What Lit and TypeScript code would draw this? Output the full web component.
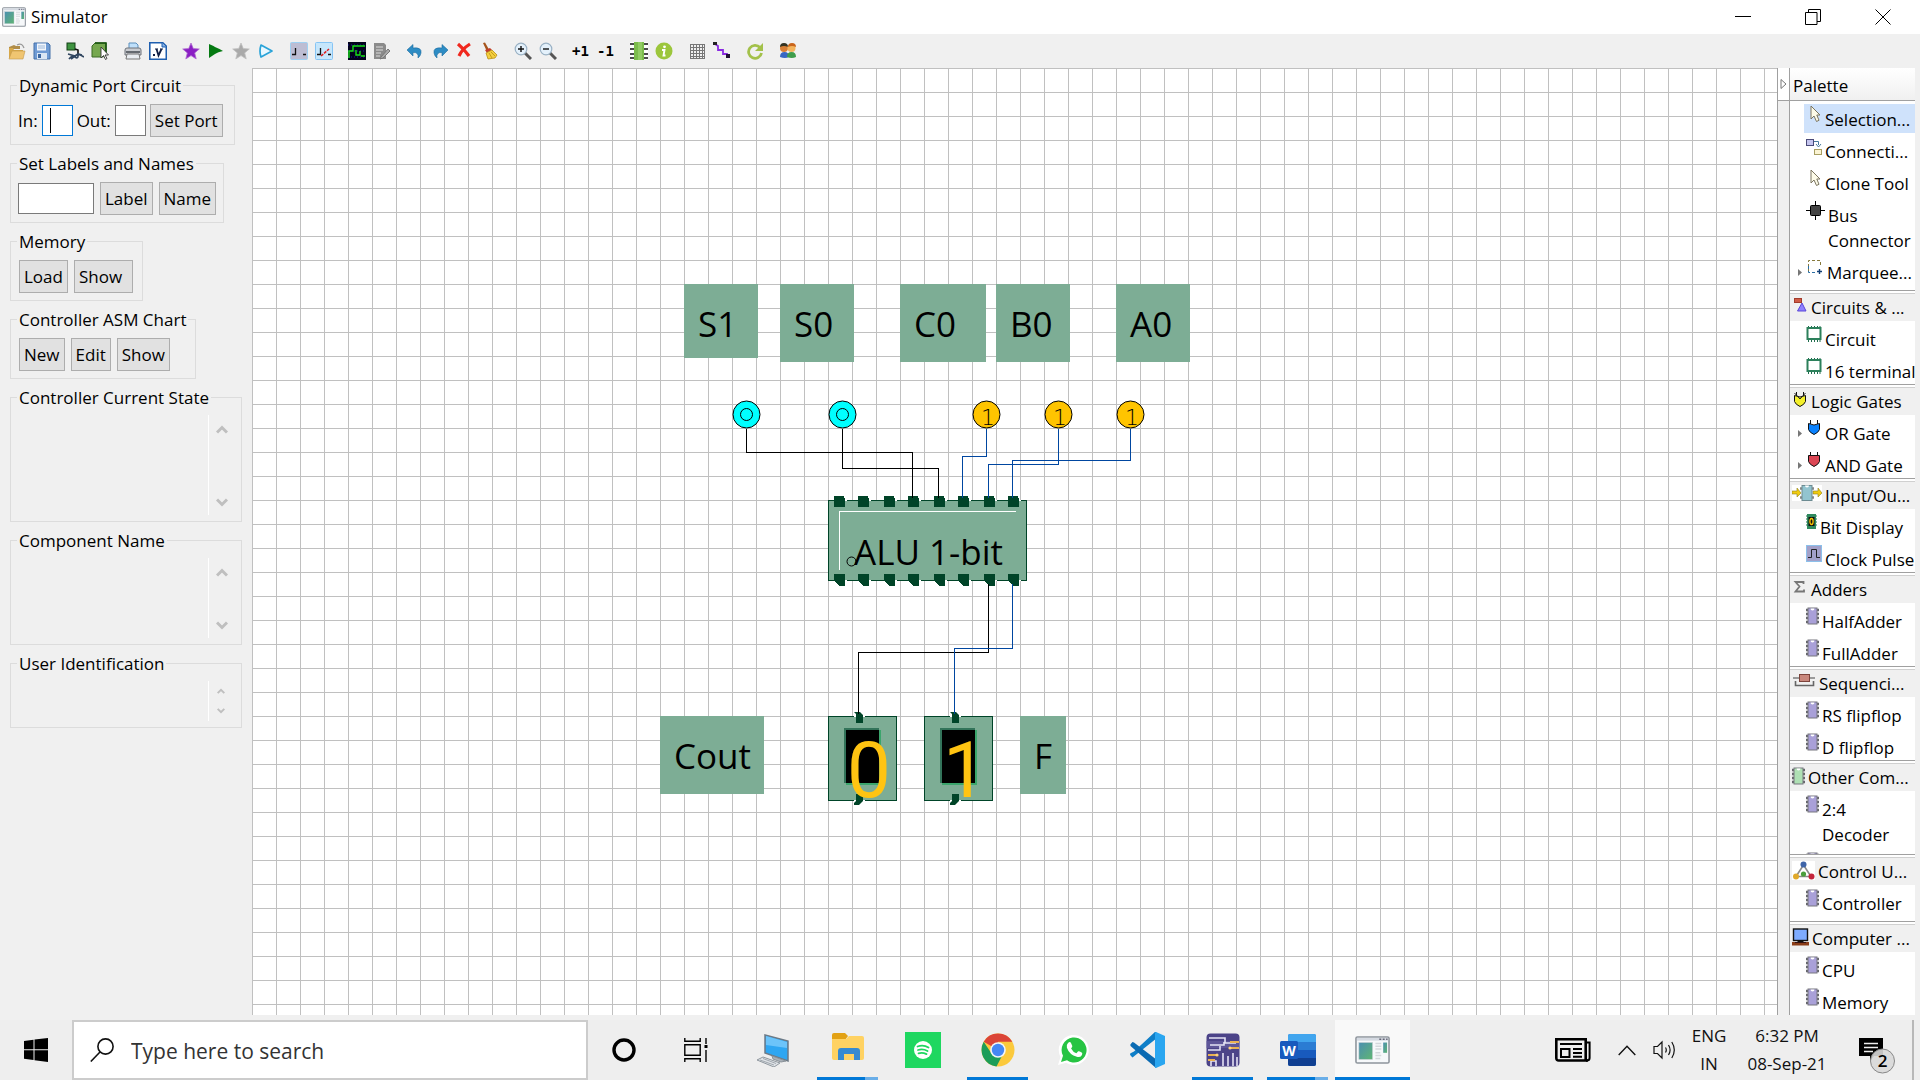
import { LitElement, html, svg, css, nothing, TemplateResult } from "lit";
import { customElement, property } from "lit/decorators.js";
import { classMap } from "lit/directives/class-map.js";

const FONT = css`"Open Sans", "Noto Sans", sans-serif`;

/* ---------- shared icon artwork ---------- */

const icon = (w: number, h: number, body: unknown) =>
  html`<svg width=${w} height=${h} viewBox="0 0 ${w} ${h}" aria-hidden="true">${body}</svg>`;

const appIcon = (w: number, h: number) => html`<svg width=${w} height=${h} viewBox="0 0 36 30" preserveAspectRatio="none" aria-hidden="true">
  <defs><linearGradient id="ag" x1="0" y1="0" x2="1" y2="1"><stop offset="0" stop-color="#4b8fb0"/><stop offset="1" stop-color="#5fb573"/></linearGradient></defs>
  <rect x="1" y="1" width="34" height="28" rx="1.5" fill="#f6f8fa" stroke="#8d949c" stroke-width="1.6"/>
  <rect x="2" y="2" width="32" height="3" fill="#d5dae2"/>
  <path d="M25 3.5h2M28.500 3.500h2M32 3.500h1.500" stroke="#667" stroke-width="1.400"/>
  <rect x="4" y="7" width="14" height="18" fill="url(#ag)" stroke="#c2cbd0" stroke-width=".6"/>
  <path d="M21 8h6M21 11h6M21 14h6M21 18h5M21 21h6M21 24h5" stroke="#d3d7db" stroke-width="1.600"/>
  <rect x="29" y="7" width="4" height="11" fill="url(#ag)"/>
</svg>`;

const starPath = "M9 1l2.300 5.600 6 .4-4.600 3.900 1.500 6L9 13.600 3.800 16.900l1.500-6L.7 7l6-.4z";

const chip = (fill: string) => icon(13, 18, svg`
  <path d="M0 3h3M0 7h3M0 11h3M0 15h3M10 3h3M10 7h3M10 11h3M10 15h3" stroke="#66666c" stroke-width="2.600"/>
  <rect x="2" y="1" width="9" height="16" fill=${fill} stroke="#77777f"/>
  <path d="M4.500 1.500a2 2 0 0 0 4 0z" fill="#fff"/>`);

const cursorIcon = icon(16, 18, svg`<path d="M5 1v13l3-3 2.500 5.500 2.500-1.200L10.800 10H14z" fill="#fdfbe8" stroke="#7b7560"/>`);

const circuitIcon = icon(16, 18, svg`
  <path d="M2.500 1v16M5.500 1v16M8.500 1v16M11.500 1v16M14 1v16" stroke="#1e6c4c"/>
  <rect x="1.500" y="3" width="13" height="11" fill="#fff" stroke="#2c805b" stroke-width="2"/>`);

const gate = (fill: string, inner: unknown = nothing) => icon(16, 18, svg`
  <path d="M4.500 1v4M11.500 1v4" stroke="#111"/>
  <path d="M2.500 4.500q5.500 3 11 0v6q-1 3-5.500 5q-4.500-2-5.500-5z" fill=${fill} stroke="#111"/>${inner}`);

/* ---------- toolbar ---------- */

const toolIcons: Record<string, unknown> = {
  open: svg`<path d="M1 5l5-2 2 1h4v3H1z" fill="#b08d4a"/><path d="M9 3q4-2 6 1l1 2" fill="none" stroke="#999" stroke-width="1.300"/><path d="M1 16V6h4l1 2h9v8z" fill="#d8a848"/><path d="M1 17l3-8h13l-2 8z" fill="#f0c571" stroke="#c2974a" stroke-width=".6"/>`,
  save: svg`<path d="M1 1h14l2 2v14H1z" fill="#6f9bd4" stroke="#4470a8"/><rect x="4" y="1.500" width="9" height="7" fill="#f2f6fb"/><path d="M5 4h7M5 6h7" stroke="#9db8da"/><rect x="4" y="11" width="10" height="6" fill="#dbe7f4"/><rect x="5" y="12" width="3" height="4" fill="#3b66a0"/>`,
  connect: svg`<rect x="1" y="1" width="8" height="7" fill="#3f9440" stroke="#123f14"/><path d="M9 7l3 1v4" fill="none" stroke="#111" stroke-width="1.600"/><path d="M2 12l7 2 3-2 4 1M3 17q3-4 6-2t3-1 6 1M5 17l4-3" fill="none" stroke="#30455f" stroke-width="1.700"/>`,
  select: svg`<path d="M1 4l3-3h11v12l-3 2H1z" fill="#76a84f" stroke="#3a6b24"/><path d="M4 1h11v12" fill="none" stroke="#14520d" stroke-width="1.600"/><path d="M10 5v11l2.500-2.500 2 4 1.500-1-2-3.500h3.500z" fill="#fff" stroke="#333" stroke-width=".9"/>`,
  print: svg`<path d="M5 7V1h7l2 2v4z" fill="#bfe0fb" stroke="#5c8fbd"/><path d="M1 8q0-2 2-2h12q2 0 2 2v5H1z" fill="#c9ccd1" stroke="#6e737a"/><path d="M2 10h14" stroke="#4b5057" stroke-width="1.600"/><path d="M3 12h12l1 5H2z" fill="#e9edf2" stroke="#777"/>`,
  verilog: svg`<path d="M.8.8h13l3.500 3.500v13H.8z" fill="#fff" stroke="#1f5fb0" stroke-width="1.600"/><path d="M13 1v4h4" fill="#86b2e6" stroke="#1f5fb0"/><path d="M7.500 7l2 6.500L12.500 7" fill="none" stroke="#111f44" stroke-width="1.800"/><path d="M6 7h3M11 7h3" stroke="#111f44"/><rect x="4" y="12" width="2" height="2" fill="#111f44"/>`,
  star: svg`<path d=${starPath} fill="#8a1fc4" stroke="#b06bd0" stroke-width=".8"/>`,
  run: svg`<path d="M2 2q5 2 6 3 5 2 8 4-5 1-8 3-3 2-6 4z" fill="#057a12"/>`,
  starOff: svg`<path d=${starPath} fill="#aaa" stroke="#c0c0c0" stroke-width=".8"/>`,
  step: svg`<path d="M4 3l11 6-11 6q-2-6 0-12z" fill="#e9f8ff" stroke="#29a3d8" stroke-width="1.700" stroke-linejoin="round"/>`,
  low: svg`<rect x=".5" y=".5" width="17" height="17" rx="1" fill="#bdbdd3" stroke="#9fd0f2"/><path d="M2 12.500h3.500V6M13 12.500h3" fill="none" stroke="#111" stroke-width="1.300"/>`,
  edge: svg`<rect x=".5" y=".5" width="17" height="17" rx="1" fill="#c6e6fb" stroke="#86c5f5"/><path d="M2 12.500h3.500V6M13 12.500h3" fill="none" stroke="#111" stroke-width="1.300"/><path d="M6 14l8-7" stroke="#e02020" stroke-width="1.600" stroke-dasharray="3 1"/>`,
  wave: svg`<rect width="18" height="18" fill="#02021c"/><path d="M0 3h18M0 9h18M0 15h18" stroke="#1a1aa0" stroke-dasharray="1 2"/><path d="M1 16V9h4V4h12M8 8v5h4v-4M13 14h4" fill="none" stroke="#18e018" stroke-width="1.400"/>`,
  edit: svg`<path d="M1 1h10l2 2v14H1z" fill="#8b8b8b"/><path d="M3 5h7M3 8h7M3 11h5M3 14h4" stroke="#ddd"/><path d="M8 15l7-8 2 2-7 7-3 1z" fill="#aaa" stroke="#777"/>`,
  undo: svg`<path d="M1 8l6-5.500v3.500q9-1 8 5-.5 3-3 5 1-6-5-5.500v3.500z" fill="#2d8cc4" stroke="#1c6c9f" stroke-width=".6"/>`,
  redo: svg`<path d="M17 8l-6-5.500v3.500q-9-1-8 5 .5 3 3 5-1-6 5-5.500v3.500z" fill="#2d8cc4" stroke="#1c6c9f" stroke-width=".6"/>`,
  remove: svg`<path d="M2 2q6 5 11 12M14 2q-8 5-11 12" fill="none" stroke="#f0281e" stroke-width="3.200"/>`,
  clean: svg`<path d="M2 1l2-.5 4 7-2.500 1z" fill="#a5541c"/><path d="M4 8l5-2 2 2-5 3z" fill="#c23c2c"/><path d="M5 11l6-3 5 5-2 3-7 1z" fill="#f4cf3f" stroke="#b98f14" stroke-width=".8"/><path d="M8 11l3 5M10 10l4 4" stroke="#b98f14" stroke-width=".8"/>`,
  zoomIn: svg`<path d="M11 11l6 6" stroke="#555" stroke-width="3"/><circle cx="7" cy="7" r="5.800" fill="#e4f1fb" stroke="#99b1c4" stroke-width="1.200"/><path d="M4 7h6M7 4v6" stroke="#111" stroke-width="1.400"/>`,
  zoomOut: svg`<path d="M11 11l6 6" stroke="#555" stroke-width="3"/><circle cx="7" cy="7" r="5.800" fill="#e4f1fb" stroke="#99b1c4" stroke-width="1.200"/><path d="M4 7h6" stroke="#111" stroke-width="1.400"/>`,
  chip: svg`<rect width="18" height="18" fill="#fff"/><path d="M0 2h18M0 7h18M0 12h18M0 16h18" stroke="#111" stroke-width="1.300"/><rect x="4" width="10" height="18" fill="#7cbc4c"/><rect x="8" width="4" height="18" fill="#92cc64"/>`,
  info: svg`<circle cx="9" cy="9" r="8.500" fill="#9cc63c"/><circle cx="9.500" cy="4.800" r="1.400" fill="#fff"/><path d="M7 8h2.500l-1 5.500h2" fill="none" stroke="#fff" stroke-width="1.900"/>`,
  grid: svg`<path d="M2.500 2v15M5.500 2v15M8.500 2v15M11.500 2v15M14.500 2v15M2 2.500h15M2 5.500h15M2 8.500h15M2 11.500h15M2 14.500h15M2 16.500h15M16.500 2v15" stroke="#777" fill="none"/>`,
  route: svg`<path d="M2 2l3 2v4h5v4h4v3" fill="none" stroke="#8a2be2" stroke-width="1.800"/><rect x="0" y="0" width="4" height="3" fill="#222"/><rect x="13" y="12" width="4" height="4" fill="#221133"/>`,
  refresh: svg`<path d="M14 5.500A6.500 6.500 0 1 0 15.500 11" fill="none" stroke="#a3c14a" stroke-width="2.800"/><path d="M17 1v8H9z" fill="#a3c14a"/>`,
  users: svg`<circle cx="5" cy="6" r="4" fill="#d87f36"/><path d="M1 5q0-4 4-4t4 4q-4-2-8 0z" fill="#332"/><path d="M1 15q0-5 4.500-5t4.500 5q-4 2-9 0z" fill="#3767c4"/><circle cx="12.500" cy="6" r="4" fill="#f3b45c"/><path d="M9 5q0-4 4-4t4 4q-4-2-8 0z" fill="#c9641b"/><path d="M8 15q0-5 4.500-5t4.500 5q-4 2-9 0z" fill="#3f9d4c"/>`,
};

const TOOL_GROUPS: string[][] = [
  ["open", "save"],
  ["connect", "select"],
  ["print", "verilog"],
  ["star", "run", "starOff", "step"],
  ["low", "edge"],
  ["wave", "edit"],
  ["undo", "redo", "remove", "clean"],
  ["zoomIn", "zoomOut"],
  ["+1", "-1"],
  ["chip", "info"],
  ["grid", "route"],
  ["refresh"],
  ["users"],
];

@customElement("sim-toolbar")
class SimToolbar extends LitElement {
  static styles = css`
    :host { display: flex; align-items: center; gap: 8px; height: 34px; padding: 0 4px; background: #f0f0f0; box-sizing: border-box; }
    .group { display: flex; }
    button { display: flex; align-items: center; justify-content: center; width: 25px; height: 26px; padding: 0; border: 0; background: none; font: bold 14px/18px "DejaVu Sans Mono", monospace; color: #000; }
  `;
  render() {
    return TOOL_GROUPS.map((g) => html`<div class="group">${g.map((name) => html`
      <button aria-label=${name}>${name in toolIcons ? icon(18, 18, toolIcons[name]) : name}</button>`)}</div>`);
  }
}

/* ---------- left control panel ---------- */

@customElement("control-panel")
class ControlPanel extends LitElement {
  static styles = css`
    :host { display: flex; flex-direction: column; align-items: flex-start; gap: 6px; flex: none; width: 252px; padding: 5px 10px; box-sizing: border-box; background: #f0f0f0; font: 17px/24px ${FONT}; color: #000; }
    fieldset { margin: 0; padding: 7px 7px; border: 1px solid #dcdcdc; box-sizing: border-box; min-width: 0; }
    legend { padding: 2px 2px 0; margin-left: -1px; line-height: 22px; white-space: nowrap; }
    .ports { width: 225px; }
    .labels { width: 214px; }
    .memory { width: 133px; }
    .asm { width: 186px; }
    .wide { width: 232px; padding: 6px 7px; }
    .row { display: flex; align-items: center; gap: 6px; height: 33px; padding-left: 1px; }
    .ports .row, .labels .row { padding-left: 0; }
    .ports .row { gap: 4px; }
    button { font: inherit; color: inherit; height: 33px; padding: 0 4px; border: 1px solid #adadad; background: #e1e1e1; white-space: nowrap; text-align: left; }
    .roomy { width: 59px; }
    input { font: inherit; width: 31px; height: 31px; padding: 0 6px; border: 1px solid #7a7a7a; background: #fff; box-sizing: border-box; outline: none; }
    .label-text { width: 76px; }
    .active { display: flex; align-items: center; width: 31px; height: 31px; border: 1px solid #0078d7; background: #fff; box-sizing: border-box; position: relative; }
    .active input { border: 0; width: 29px; height: 29px; }
    .caret { position: absolute; left: 7px; top: 2px; width: 1px; height: 25px; background: #000; }
    .scroll { display: flex; height: 100px; }
    .component { height: 80px; }
    .user { height: 40px; }
    textarea { flex: 1; min-width: 0; border: 0; border-right: 1px solid #fff; background: none; resize: none; padding: 0; outline: none; overflow: hidden; }
    .bar { display: flex; flex-direction: column; justify-content: space-between; align-items: center; width: 25px; padding: 10px 0 8px; box-sizing: border-box; }
    .user .bar { padding: 7px 2px 7px 0; }
    .bar button { display: flex; padding: 0; height: auto; border: 0; background: none; }
  `;
  private arrow(up: boolean, small: boolean) {
    const w = small ? 8 : 12;
    return html`<button aria-label=${up ? "Scroll up" : "Scroll down"}><svg width=${w} height=${small ? 7 : 10} viewBox="0 0 12 10">
      <path d=${up ? "M1 7.500L6 2.500l5 5" : "M1 2.500l5 5 5-5"} fill="none" stroke="#bfbfbf" stroke-width="3"/></svg></button>`;
  }
  private scroller(title: string, kind: string) {
    return html`<fieldset class="wide"><legend>${title}</legend>
      <div class="scroll ${kind}"><textarea readonly aria-label=${title}></textarea>
        <div class="bar">${this.arrow(true, kind === "user")}${this.arrow(false, kind === "user")}</div></div></fieldset>`;
  }
  render() {
    return html`
      <fieldset class="ports"><legend>Dynamic Port Circuit</legend>
        <div class="row"><label for="in">In:</label><span class="active"><input id="in"><i class="caret"></i></span>
          <label for="out">Out:</label><input id="out"><button>Set Port</button></div></fieldset>
      <fieldset class="labels"><legend>Set Labels and Names</legend>
        <div class="row"><input class="label-text" aria-label="Label or name"><button>Label</button><button>Name</button></div></fieldset>
      <fieldset class="memory"><legend>Memory</legend>
        <div class="row"><button>Load</button><button class="roomy">Show</button></div></fieldset>
      <fieldset class="asm"><legend>Controller ASM Chart</legend>
        <div class="row"><button>New</button><button>Edit</button><button>Show</button></div></fieldset>
      ${this.scroller("Controller Current State", "state")}
      ${this.scroller("Component Name", "component")}
      ${this.scroller("User Identification", "user")}`;
  }
}

/* ---------- circuit canvas ---------- */

interface Tag { text: string; x: number; y: number; w: number; h: number; tx: number; }

const TAGS: Tag[] = [
  { text: "S1", x: 432, y: 216, w: 74, h: 74, tx: 14 },
  { text: "S0", x: 528, y: 216, w: 74, h: 78, tx: 14 },
  { text: "C0", x: 648, y: 216, w: 86, h: 78, tx: 14 },
  { text: "B0", x: 744, y: 216, w: 74, h: 78, tx: 14 },
  { text: "A0", x: 864, y: 216, w: 74, h: 78, tx: 14 },
  { text: "Cout", x: 408, y: 648, w: 104, h: 78, tx: 14 },
  { text: "F", x: 768, y: 648, w: 46, h: 78, tx: 14 },
];

const INPUTS = [
  { x: 494, on: false }, { x: 590, on: false }, { x: 734, on: true }, { x: 806, on: true }, { x: 878, on: true },
];

const WIRES = [
  { on: false, d: "M494.500 360.500V384.500H660.500V430" },
  { on: false, d: "M590.500 360.500V400.500H686.500V430" },
  { on: true, d: "M734.500 360.500V388.500H710.500V430" },
  { on: true, d: "M806.500 360.500V396.500H736.500V430" },
  { on: true, d: "M878.500 360.500V392.500H760.500V430" },
  { on: false, d: "M736.500 516V584.500H606.500V646" },
  { on: true, d: "M760.500 516V580.500H702.500V646" },
];

const PINS = [582, 606, 632, 656, 682, 706, 732, 756];

@customElement("circuit-canvas")
class CircuitCanvas extends LitElement {
  static styles = css`
    :host { display: block; flex: 1; min-width: 0; overflow: hidden; background-color: #fff;
      background-image: linear-gradient(#c0c0c0 1px, transparent 1px), linear-gradient(90deg, #c0c0c0 1px, transparent 1px);
      background-size: 24px 24px; }
    svg { display: block; width: 100%; height: 100%; }
    .tag { fill: #7dad95; }
    .name { font: 35px ${FONT}; fill: #000; }
    .digit { font: 78px Roboto, "Liberation Sans", sans-serif; fill: #ffc412; }
    .bit { font: 200 22px "DejaVu Sans", sans-serif; fill: #000; text-anchor: middle; }
    .wire { fill: none; stroke: #000; stroke-width: 1; }
    .wire.on { stroke: #0046a0; }
    .body { fill: #7dad95; stroke: #004428; }
    .pin { fill: #004428; }
    .gap { fill: #fff; }
    .crisp { shape-rendering: crispEdges; }
  `;
  private display(x: number, value: string) {
    return svg`<g transform="translate(${x} 648)">
      <rect class="body" x=".5" y=".5" width="68" height="84"/>
      <rect class="gap" x="26" y="0" width="11" height="1"/><rect class="gap" x="26" y="84" width="11" height="1"/>
      <rect x="18" y="14" width="35" height="55" fill="#3ba56c"/>
      <rect x="16" y="12" width="35" height="55" fill="#33745a"/>
      <rect x="18" y="14" width="33" height="53" fill="#000"/>
      <path class="pin" d="M26-4h6l3 3v8h-7v-9z"/>
      <path class="pin" d="M28 78h7v7l-4 4h-5v-2l2-2z"/>
      <text class="digit" x="19" y="81">${value}</text></g>`;
  }
  render() {
    return html`<svg role="img" aria-label="Circuit">
      ${TAGS.map((t) => svg`<rect class="tag" x=${t.x} y=${t.y} width=${t.w} height=${t.h}/>
        <text class="name" x=${t.x + t.tx} y=${t.y + 53}>${t.text}</text>`)}
      ${INPUTS.map((i) => svg`<circle cx=${i.x + 0.5} cy="346.500" r="13.500" fill=${i.on ? "#ffc400" : "#00ffff"} stroke="#000"/>
        ${i.on ? svg`<text class="bit" x=${i.x + 2} y="357">1</text>` : svg`<ellipse cx=${i.x + 0.5} cy="346.500" rx="6" ry="6" fill="none" stroke="#000"/>`}`)}
      <g class="crisp">
        <rect class="body" x="576.500" y="432.500" width="198" height="80"/>
        <path d="M764 443.500H587.500V502" fill="none" stroke="#fff"/>
        ${PINS.map((p) => svg`<rect class="gap" x=${p + 10} y="432" width="3" height="1"/><rect class="gap" x=${p + 11} y="512" width="2" height="1"/>
          <path class="pin" d="M${p} 428h10v2h1v9h-11z"/><path class="pin" d="M${p} 506h11v12h-6l-5-5z"/>`)}
      </g>
      <circle cx="599.500" cy="493.500" r="4.500" fill="none" stroke="#000"/>
      <text class="name" x="602" y="497">ALU 1-bit</text>
      ${this.display(576, "0")}${this.display(672, "1")}
      ${WIRES.map((w) => svg`<path class=${classMap({ wire: true, crisp: true, on: w.on })} d=${w.d}/>`)}
    </svg>`;
  }
}

/* ---------- palette ---------- */

interface Entry { text: string; art: TemplateResult; more?: boolean; selected?: boolean; wrap?: boolean; }
interface Drawer { title?: string; art?: TemplateResult; size: string; items: Entry[]; }

const purple = chip("#a9a0d8");

const DRAWERS: Drawer[] = [
  { size: "tools", items: [
    { text: "Selection...", art: cursorIcon, selected: true },
    { text: "Connecti...", art: icon(16, 18, svg`<rect x=".5" y="2.500" width="7" height="6" fill="#c5c5ee" stroke="#4a4a78"/><path d="M8 4.500h4.500V8M10 7l2.500 3L15 7" fill="none" stroke="#4a7a9c"/><rect x="8.500" y="12.500" width="7" height="5" fill="#fbf4d4" stroke="#a89e62"/>`) },
    { text: "Clone Tool", art: cursorIcon },
    { text: "Bus Connector", wrap: true, art: icon(19, 19, svg`<path d="M0 9.500h19M9.500 0v19" stroke="#000"/><rect x="4.500" y="4.500" width="10" height="10" rx="1" fill="#444" stroke="#000"/>`) },
    { text: "Marquee...", more: true, art: icon(18, 18, svg`<path d="M2.500 14V2.500h12V9" fill="none" stroke="#877a3c" stroke-dasharray="3 2"/><path d="M2.500 8v6.500h8" fill="none" stroke="#2c6ea3" stroke-dasharray="3 2"/><path d="M11 13.500h5M13.500 11v5" stroke="#123f74" stroke-width="1.400"/>`) },
  ] },
  { title: "Circuits & ...", size: "pair", art: icon(16, 16, svg`<rect x="2.500" y="1.500" width="7" height="4" fill="#cf5b45" stroke="#a33c2c"/><path d="M10 6l4 8H5.500z" fill="#8d80ff" stroke="#5a46d8"/>`),
    items: [{ text: "Circuit", art: circuitIcon }, { text: "16 terminal", art: circuitIcon }] },
  { title: "Logic Gates", size: "pair", art: gate("#f4f02c", svg`<path d="M2.500 2l5.500 6 5.500-6" fill="none" stroke="#222"/>`),
    items: [{ text: "OR Gate", more: true, art: gate("#0a82ff") }, { text: "AND Gate", more: true, art: icon(16, 18, svg`<path d="M4.500 1v4M11.500 1v4" stroke="#111"/><path d="M2.500 4.500h11v6q-1 3-5.500 5q-4.500-2-5.500-5z" fill="#dc4654" stroke="#111"/>`) }] },
  { title: "Input/Ou...", size: "pair", art: icon(30, 16, svg`<rect width="30" height="16" fill="#fff"/><path d="M0 6h5V3l4 5-4 4V9H0zM21 6h5V3l4 5-4 4V9h-5z" fill="#f0cb10" stroke="#8d8020" stroke-width=".6"/><path d="M8 3.500h14M8 12.500h14" stroke="#888" stroke-width="2.600"/><rect x="10" y=".5" width="10" height="15" fill="#92c4cf" stroke="#6c8b92"/><path d="M13 .5a2 2 0 0 0 4 0z" fill="#fff"/>`),
    items: [
      { text: "Bit Display", art: icon(11, 18, svg`<path d="M0 3h11M0 6h11M0 9h11M0 12h11" stroke="#1e6c4c"/><rect x="1" y="1" width="9" height="15" fill="#2f8a5e"/><rect x="2.500" y="4" width="6" height="9" fill="#111"/><ellipse cx="5.500" cy="8.500" rx="1.600" ry="3" fill="none" stroke="#ffc800" stroke-width="1.300"/>`) },
      { text: "Clock Pulse", art: icon(16, 18, svg`<rect x=".5" y=".5" width="15" height="16" fill="#a2a0c8" stroke="#8cc0ea"/><path d="M2 12.500h3.500v-8h5v8H14" fill="none" stroke="#222"/>`) },
    ] },
  { title: "Adders", size: "pair", art: icon(16, 16, svg`<path d="M11.500 5v-2h-8l4 4.500-4 5h8.500v-2" fill="none" stroke="#777" stroke-width="1.800"/>`),
    items: [{ text: "HalfAdder", art: purple }, { text: "FullAdder", art: purple }] },
  { title: "Sequenci...", size: "pair", art: icon(24, 16, svg`<path d="M1 5h22" stroke="#444"/><path d="M3.500 8v4.500h18V8" fill="none" stroke="#666" stroke-width="1.600"/><rect x="7.500" y="1.500" width="10" height="7" fill="#c9877c" stroke="#7d443c"/>`),
    items: [{ text: "RS flipflop", art: purple }, { text: "D flipflop", art: purple }] },
  { title: "Other Com...", size: "pair", art: chip("#aee0b4"),
    items: [{ text: "2:4 Decoder", wrap: true, art: purple }, { text: "", art: purple }] },
  { title: "Control U...", size: "single", art: icon(23, 19, svg`<rect width="23" height="19" fill="#fff"/><path d="M11.500 4L4 15.500h15z" fill="none" stroke="#8a8a8a" stroke-width="1.600"/><circle cx="11.500" cy="3.500" r="3" fill="#3f65a8"/><circle cx="4" cy="15.500" r="3" fill="#e0a92a"/><circle cx="19.500" cy="15.500" r="3" fill="#c4243b"/><circle cx="11.500" cy="13" r="2.600" fill="#4a9e3c"/>`),
    items: [{ text: "Controller", art: purple }] },
  { title: "Computer ...", size: "last", art: icon(17, 18, svg`<rect x="1.500" y="1" width="14" height="11.500" fill="#7eabff" stroke="#111" stroke-width="1.400"/><path d="M6 13h5l2 2H4z" fill="#111"/><path d="M0 14h17v3.500H0z" fill="#8a3d18"/><path d="M3 14.500h11" stroke="#311"/>`),
    items: [{ text: "CPU", art: purple }, { text: "Memory", art: purple }] },
];

@customElement("tool-palette")
class ToolPalette extends LitElement {
  static styles = css`
    :host { display: flex; flex: none; font: 17px/25px ${FONT}; color: #000; overflow: hidden; margin-right: 5px; }
    .flyout { width: 11px; border: solid #a0a0a0; border-width: 0 1px; background: #f0f0f0; }
    .toggle { display: flex; align-items: center; justify-content: center; width: 11px; height: 33px; padding: 0; border: 0; border-bottom: 1px solid #a0a0a0; background: #fff; box-sizing: border-box; }
    .palette { display: flex; flex-direction: column; width: 125px; background: #fff; overflow: hidden; }
    h2 { margin: 0; padding: 5px 3px 2px; height: 33px; font: inherit; border-bottom: 1px solid #a0a0a0; background: linear-gradient(#fff, #f0f0f0); box-sizing: border-box; flex: none; }
    .drawer { flex: none; overflow: hidden; white-space: nowrap; }
    .tools { height: 189px; }
    .pair { height: 94px; }
    .single { height: 67px; }
    .last { height: 100px; }
    button { font: inherit; color: inherit; border: 0; background: none; text-align: left; display: flex; align-items: flex-start; gap: 3px; }
    .title { width: 100%; height: 31px; padding: 4px 0 0 2px; border-top: 1px solid #a0a0a0; background: linear-gradient(#fff 2px, #d0d0d0 2px, #d0d0d0 3px, #f0f0f0 3px); box-sizing: border-box; }
    .title svg { margin-top: 2px; }
    svg { flex: none; display: block; }
    .items { padding-top: 3px; }
    .entry { display: grid; grid-template-columns: 14px 1fr; margin-bottom: 3px; }
    .more { margin: 12px 0 0 8px; }
    .tool { min-height: 29px; padding: 3px 0 1px 2px; min-width: 0; }
    .tool svg { margin-top: -2px; }
    .wrap { white-space: normal; }
    .selected { background: #cfe2fb; }
  `;
  render() {
    return html`
      <div class="flyout"><button class="toggle" aria-label="Hide palette">${icon(7, 12, svg`<path d="M1 1.500v9L6 6z" fill="#fff" stroke="#777"/>`)}</button></div>
      <div class="palette"><h2>Palette</h2>
        ${DRAWERS.map((d) => html`<section class="drawer ${d.size}">
          ${d.title ? html`<button class="title">${d.art}<span>${d.title}</span></button>` : nothing}
          <div class="items">${d.items.map((e) => html`<div class="entry">
            <span>${e.more ? html`<svg class="more" width="4" height="7" viewBox="0 0 4 7"><path d="M0 0v7l4-3.500z" fill="#777"/></svg>` : nothing}</span>
            <button class=${classMap({ tool: true, selected: !!e.selected, wrap: !!e.wrap })}>${e.art}<span>${e.text}</span></button></div>`)}</div>
        </section>`)}
      </div>`;
  }
}

/* ---------- Windows taskbar ---------- */

interface Task { name: string; state: string; art: TemplateResult; }

const TASKS: Task[] = [
  { name: "This PC", state: "", art: icon(34, 34, svg`<path d="M9 2l23 6v20L9 20z" fill="#2ea6f2" stroke="#6d7a86" stroke-width="1.500"/><path d="M10 3l21 6v6L10 12z" fill="#6cc4fa"/><path d="M16 23l1 3 8 3 5-1z" fill="#aab2ba" stroke="#8a9299"/><path d="M1 27l6-3 17 6-6 4z" fill="#dfe3e7" stroke="#8f979e"/><path d="M4 27l14 5M7 25.500l13 5" stroke="#8f979e" stroke-width=".8"/>`) },
  { name: "File Explorer", state: "stack", art: icon(34, 38, svg`<path d="M1 4q0-2 2-2h11l3 3-3 4H1z" fill="#e2a114"/><path d="M1 8h14l3-3h13q2 0 2 2v20q0 2-2 2H3q-2 0-2-2z" fill="#ffd262"/><path d="M7 29V20q0-3 3-3h16q3 0 3 3v9h-6v-6H13v6z" fill="#378ad0"/>`) },
  { name: "Spotify", state: "", art: icon(36, 36, svg`<rect width="36" height="36" fill="#1ed760"/><circle cx="18" cy="18" r="9" fill="#fff"/><path d="M12.500 14.500q6-2 11 1M13 18q5-1.500 9.500 1M13.500 21.300q4-1.200 8 .8" fill="none" stroke="#1ed760" stroke-width="1.800" stroke-linecap="round"/>`) },
  { name: "Chrome", state: "run", art: icon(34, 34, svg`<circle cx="17" cy="17" r="16.500" fill="#fbc93c"/><path d="M17 17L2.700 8.800A16.500 16.500 0 0 1 31.300 8.800H17z" fill="#db4437"/><path d="M2.700 8.800A16.500 16.500 0 0 0 15.500 33.400L22.500 20 17 17l-6.500 3.500z" fill="#1c9d58"/><circle cx="17" cy="17" r="7.800" fill="#f3f5f7"/><circle cx="17" cy="17" r="6.200" fill="#4587f4"/>`) },
  { name: "WhatsApp", state: "", art: icon(34, 34, svg`<path d="M2 32l2.500-8A15 15 0 1 1 10 29.800z" fill="#fff"/><path d="M5 29l2-6.200A12.500 12.500 0 1 1 11 27.300z" fill="#27c443"/><path d="M12 10q2-2 3 0l1.300 3q.2 1-1.200 2.400 1.900 3.600 5.300 4.900l1.800-2q.7-.4 3.800 1.400.7.500-.2 2.500-1.600 2.500-5 1.600-7.400-2-9.900-9-.7-3 1.100-4.800z" fill="#fff"/>`) },
  { name: "Visual Studio Code", state: "", art: icon(36, 36, svg`<path d="M26 1L4 21.500 1 23q-2 1 0 3l1.500 1.400L27 8z" fill="#0f7fc8" transform="translate(0 -2)"/><path d="M27 28L4 10.500 2.500 10 .8 12q-1 1 0 2.200L26 36z" fill="#0a6ab2"/><path d="M26 0l9 4v28l-9 4q-1.500 0-1-2V2q-.3-2 1-2z" fill="#2aa6f0"/>`) },
  { name: "Circuit Tool", state: "run", art: icon(34, 34, svg`<rect x=".5" y=".5" width="33" height="33" rx="4" fill="#4b4388"/><path d="M0 8h34v7H0z" fill="#716aa8" opacity=".5"/><path d="M3 5h16v5h11M4 12h14V9M2 17h12v-4M17 33V20M22 33V23M27 33V20M31 33V24M5 33v-5h5v5" fill="none" stroke="#e4e2f4" stroke-width="1.600"/><path d="M2 22h8M24 9h9M2 27h7M24 15h9" stroke="#e9b252" stroke-width="2"/><circle cx="11" cy="22" r="1.600" fill="#ffd27c"/><circle cx="24" cy="15" r="1.600" fill="#ffd27c"/>`) },
  { name: "Word", state: "stack", art: icon(36, 34, svg`<rect x="8" y="1" width="28" height="32" rx="2" fill="#2b7cd3"/><path d="M8 3q0-2 2-2h24q2 0 2 2v6H8z" fill="#41a5ee"/><path d="M8 17h28v8H8z" fill="#185abd"/><path d="M8 25h28v6q0 2-2 2H10q-2 0-2-2z" fill="#103f91"/><rect x="0" y="8" width="18" height="18" rx="1.500" fill="#185abd"/><text x="9" y="22.500" text-anchor="middle" font-family="Open Sans, sans-serif" font-weight="700" font-size="14" fill="#fff">W</text>`) },
  { name: "Simulator", state: "active", art: appIcon(35, 28) },
];

@customElement("task-bar")
class TaskBar extends LitElement {
  static styles = css`
    :host { display: flex; align-items: stretch; flex: none; height: 60px; background: #eee; color: #111; font: 17px/28px ${FONT}; }
    button { display: flex; align-items: center; justify-content: center; border: 0; padding: 0; background: none; font: inherit; color: inherit; }
    svg { display: block; }
    .start, .shell { width: 72px; }
    .search { display: flex; align-items: center; gap: 17px; width: 516px; padding: 2px 16px 0; border: 2px solid #ccc; background: #fff; box-sizing: border-box; }
    .search svg { margin-bottom: 2px; }
    .search input { flex: 1; min-width: 0; border: 0; outline: none; padding: 0; background: none; font: 21px/28px ${FONT}; }
    .search input::placeholder { color: #333; opacity: 1; }
    .tasks { display: flex; margin-left: 3px; flex: 1; }
    .task { width: 75px; border-bottom: 3px solid transparent; padding-top: 3px; position: relative; box-sizing: border-box; }
    .run::after, .stack::after, .active::after { content: ""; position: absolute; left: 7px; right: 7px; bottom: -3px; height: 3px; background: #0078d7; }
    .stack::after { background: linear-gradient(90deg, #0078d7 48px, #6aaee8 48px); }
    .active { background: #f9f9f9; border-bottom-color: #eee; }
    .active::after { left: 0; right: 0; }
    .tray { display: flex; align-items: stretch; }
    .news { width: 64px; }
    .chev { width: 44px; }
    .sound { width: 30px; }
    .lang { width: 60px; }
    .clock { width: 96px; }
    .lang, .clock { flex-direction: column; }
    .notes { width: 77px; padding-left: 6px; box-sizing: border-box; }
    .desk { width: 8px; border-left: 2px solid #b8b8b8; box-sizing: border-box; }
  `;
  render() {
    return html`
      <button class="start" aria-label="Start">${icon(24, 24, svg`<path d="M0 3l9.500-1.300v9.600H0zM10.500 1.500L24 0v11.300H10.500zM0 12.300h9.500V22L0 20.800zM10.500 12.300H24V24l-13.500-1.800z" fill="#000"/>`)}</button>
      <label class="search">${icon(24, 24, svg`<circle cx="15.500" cy="8.500" r="7.600" fill="none" stroke="#111" stroke-width="1.600"/><path d="M10 14L.8 23.500" stroke="#111" stroke-width="1.600"/>`)}
        <input type="text" placeholder="Type here to search" aria-label="Type here to search"></label>
      <button class="shell" aria-label="Cortana">${icon(24, 24, svg`<circle cx="12" cy="12" r="10" fill="none" stroke="#000" stroke-width="3.400"/>`)}</button>
      <button class="shell" aria-label="Task View">${icon(24, 24, svg`<path d="M.8 0v3.200h15.400V0M.8 24v-3.200h15.400V24M.8 6.800h15.400v10.400H.8zM22 0v6M22 12v12" fill="none" stroke="#000" stroke-width="1.400"/><rect x="20.500" y="7" width="3" height="3" fill="#000"/>`)}</button>
      <div class="tasks">${TASKS.map((t) => html`<button class="task ${t.state}" aria-label=${t.name}>${t.art}</button>`)}</div>
      <div class="tray">
        <button class="news" aria-label="News">${icon(36, 24, svg`<path d="M32 4.500h2.600v15.500q0 2.500-3 2.500" fill="none" stroke="#000" stroke-width="2"/><path d="M1.300 1.300h29.400v21.200h-27q-2.400 0-2.400-2.500z" fill="none" stroke="#000" stroke-width="2.600"/><path d="M31 22.500h2" stroke="#000" stroke-width="2.600"/><path d="M5 6h22M18 11h9M18 15h9M18 18.800h9" stroke="#000" stroke-width="2"/><rect x="6" y="11" width="8.500" height="8" fill="none" stroke="#000" stroke-width="2"/>`)}</button>
        <button class="chev" aria-label="Show hidden icons">${icon(18, 11, svg`<path d="M.7 10L9 1.200 17.300 10" fill="none" stroke="#111" stroke-width="1.400"/>`)}</button>
        <button class="sound" aria-label="Volume">${icon(23, 20, svg`<path d="M1 6.500h3.500L9 2v16l-4.500-4.500H1z" fill="none" stroke="#111" stroke-width="1.200"/><path d="M12.500 7.500q1.600 2.500 0 5M15.500 5q3.200 5 0 10M18.800 2q5 8 0 16" fill="none" stroke="#111" stroke-width="1.200"/>`)}</button>
        <button class="lang"><span>ENG</span><span>IN</span></button>
        <button class="clock"><span>6:32 PM</span><span>08-Sep-21</span></button>
        <button class="notes" aria-label="2 notifications">${icon(38, 48, svg`<path d="M1 12h24v18h-9l-4 5v-5H1z" fill="#000"/><path d="M6 17.500h14M6 21.500h14M6 25.500h9" stroke="#eee" stroke-width="1.400"/><circle cx="24.500" cy="35" r="12" fill="#d8d8d8" fill-opacity=".9" stroke="#888"/><text x="24.500" y="41" text-anchor="middle" font-family="Open Sans, sans-serif" font-weight="600" font-size="17" fill="#000">2</text>`)}</button>
        <div class="desk"></div>
      </div>`;
  }
}

/* ---------- window shell ---------- */

@customElement("app-root")
class AppRoot extends LitElement {
  @property() heading = "Simulator";
  static styles = css`
    :host { display: flex; flex-direction: column; height: 100vh; overflow: hidden; background: #f0f0f0; font: 17px/24px ${FONT}; color: #000; }
    header { display: flex; align-items: center; flex: none; height: 34px; background: #fff; padding: 0 2px; box-sizing: border-box; }
    h1 { flex: 1; margin: 0 0 0 5px; font: inherit; }
    header button { display: flex; align-items: center; justify-content: center; width: 70px; height: 34px; padding: 0; border: 0; background: none; }
    main { display: flex; flex: 1; min-height: 0; margin-bottom: 5px; }
  `;
  render() {
    return html`
      <header>${appIcon(24, 20)}<h1>${this.heading}</h1>
        <button aria-label="Minimize">${icon(16, 16, svg`<path d="M0 7.500h16" stroke="#000"/>`)}</button>
        <button aria-label="Restore">${icon(16, 16, svg`<path d="M.5 3.500h11.500v12H.5zM3.500 3.500v-3h12v12h-3.500" fill="none" stroke="#000"/>`)}</button>
        <button aria-label="Close">${icon(16, 16, svg`<path d="M.5.5l15 15M15.500.5l-15 15" stroke="#000"/>`)}</button>
      </header>
      <sim-toolbar></sim-toolbar>
      <main><control-panel></control-panel><circuit-canvas></circuit-canvas><tool-palette></tool-palette></main>
      <task-bar></task-bar>`;
  }
}
